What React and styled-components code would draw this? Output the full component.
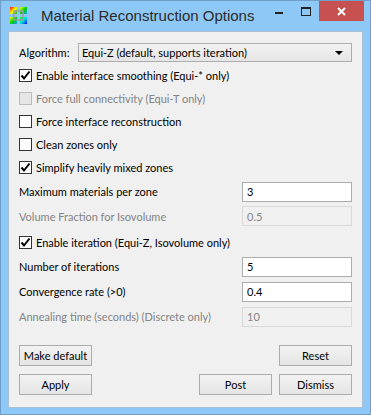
import React from 'react';
import styled, { createGlobalStyle } from 'styled-components';

const GlobalStyle = createGlobalStyle`
  html, body { margin: 0; padding: 0; }
  body {
    width: 371px;
    height: 415px;
    overflow: hidden;
    background: #8dc8f7;
    font-family: Lato, "Liberation Sans", Arial, sans-serif;
  }
`;

const Window = styled.div`
  width: 371px;
  height: 415px;
  box-sizing: border-box;
  background: #8dc8f7;
  border: 1px solid #6f9ec9;
  display: flex;
  flex-direction: column;
`;

const TitleBar = styled.div`
  height: 30px;
  display: flex;
  align-items: flex-start;
  padding-left: 9px;
`;

const TitleIcon = styled.div`
  width: 17px;
  height: 17px;
  margin-top: 6px;
`;

const TitleText = styled.div`
  margin-left: 14px;
  margin-top: 6px;
  font-family: "Liberation Sans", Arial, sans-serif;
  font-size: 15px;
  white-space: nowrap;
  color: #2b2b2b;
  flex: 1;
`;

const Controls = styled.div`
  display: flex;
  align-items: flex-start;
  margin-right: 6px;
`;

const CtrlButton = styled.div`
  width: ${p => p.$w}px;
  height: 20px;
  display: flex;
  align-items: center;
  justify-content: center;
  background: ${p => (p.$close ? '#c75050' : 'transparent')};
`;

const Panel = styled.div`
  flex: 1;
  margin: 0 7px 6px 7px;
  background: #f0f0f0;
  border: 1px solid #a9bfd6;
  padding: 11px 10px 0 10px;
  font-size: 11px;
  color: #000;
  display: flex;
  flex-direction: column;
`;

const AlgoRow = styled.div`
  display: flex;
  align-items: center;
  height: 19px;
  margin-bottom: 2px;
`;

const AlgoLabel = styled.div`
  width: 59px;
`;

const Combo = styled.div`
  flex: 1;
  height: 19px;
  box-sizing: border-box;
  border: 1px solid #acacac;
  background: linear-gradient(#f2f2f2, #e5e5e5);
  display: flex;
  align-items: center;
  padding: 0 8px 0 3px;
`;

const ComboText = styled.div`
  flex: 1;
`;

const Arrow = styled.div`
  width: 0;
  height: 0;
  border-left: 4px solid transparent;
  border-right: 4px solid transparent;
  border-top: 4px solid #000;
`;

const CheckRow = styled.div`
  display: flex;
  align-items: center;
  height: 23px;
  margin-top: ${p => p.$mt || 0}px;
  color: ${p => (p.$disabled ? '#838383' : '#000')};
`;

const Box = styled.div`
  width: 13px;
  height: 13px;
  box-sizing: border-box;
  border: 1px solid ${p => (p.$disabled ? '#bcbcbc' : '#333')};
  background: ${p => (p.$disabled ? '#e6e6e6' : '#fff')};
  margin-right: 4px;
  display: flex;
  align-items: center;
  justify-content: center;
`;

const FieldRow = styled.div`
  display: flex;
  align-items: center;
  justify-content: space-between;
  height: ${p => p.$h || 25}px;
  color: ${p => (p.$disabled ? '#838383' : '#000')};
`;

const Input = styled.div`
  width: 110px;
  height: 20px;
  box-sizing: border-box;
  border: 1px solid ${p => (p.$disabled ? '#d9d9d9' : '#acacac')};
  background: ${p => (p.$disabled ? '#f0f0f0' : '#fff')};
  color: ${p => (p.$disabled ? '#838383' : '#000')};
  padding-left: 4px;
  display: flex;
  align-items: center;
`;

const ButtonArea = styled.div`
  margin-top: 16px;
  display: flex;
  flex-direction: column;
  gap: 8px;
`;

const ButtonRow = styled.div`
  display: flex;
  gap: 7px;
`;

const Spacer = styled.div`
  flex: 1;
`;

const Button = styled.div`
  width: 73px;
  height: 21px;
  box-sizing: border-box;
  border: 1px solid #acacac;
  background: linear-gradient(#f2f2f2, #e5e5e5);
  display: flex;
  align-items: center;
  justify-content: center;
`;

const Check = () => (
  <svg width="11" height="11" viewBox="0 0 11 11">
    <path d="M1.5 5.5 L4 8.5 L9.5 1.5" fill="none" stroke="#000" strokeWidth="2" />
  </svg>
);

const AppIcon = () => (
  <svg width="17" height="17" viewBox="0 0 17 17">
    <defs>
      <linearGradient id="g1" x1="0" y1="0" x2="1" y2="1">
        <stop offset="0" stopColor="#ff0000" />
        <stop offset="0.5" stopColor="#ffff00" />
        <stop offset="1" stopColor="#00c000" />
      </linearGradient>
      <linearGradient id="g2" x1="0" y1="0" x2="1" y2="1">
        <stop offset="0" stopColor="#ffff00" />
        <stop offset="0.5" stopColor="#00d000" />
        <stop offset="1" stopColor="#00a0ff" />
      </linearGradient>
      <linearGradient id="g3" x1="0" y1="0" x2="1" y2="1">
        <stop offset="0" stopColor="#00ff00" />
        <stop offset="0.5" stopColor="#00e0e0" />
        <stop offset="1" stopColor="#0000ff" />
      </linearGradient>
    </defs>
    <rect x="0" y="0" width="7" height="7" fill="url(#g1)" />
    <rect x="10" y="0" width="7" height="7" fill="url(#g2)" />
    <rect x="0" y="10" width="7" height="7" fill="url(#g2)" />
    <rect x="10" y="10" width="7" height="7" fill="url(#g3)" />
    <rect x="4" y="4" width="9" height="9" fill="none" stroke="#9a9aa8" strokeWidth="1.5" />
  </svg>
);

const checks = [
  { label: 'Enable interface smoothing (Equi-* only)', checked: true },
  { label: 'Force full connectivity (Equi-T only)', disabled: true },
  { label: 'Force interface reconstruction' },
  { label: 'Clean zones only' },
  { label: 'Simplify heavily mixed zones', checked: true },
];

const CheckItem = ({ label, checked, disabled, mt }) => (
  <CheckRow $disabled={disabled} $mt={mt}>
    <Box $disabled={disabled}>{checked && <Check />}</Box>
    {label}
  </CheckRow>
);

const Field = ({ label, value, disabled, h }) => (
  <FieldRow $disabled={disabled} $h={h}>
    <span>{label}</span>
    <Input $disabled={disabled}>{value}</Input>
  </FieldRow>
);

export default function App() {
  return (
    <>
      <GlobalStyle />
      <Window>
        <TitleBar>
          <TitleIcon><AppIcon /></TitleIcon>
          <TitleText>Material Reconstruction Options</TitleText>
          <Controls>
            <CtrlButton $w={26}>
              <svg width="8" height="8" viewBox="0 0 8 8"><rect x="0" y="5" width="8" height="2" fill="#222" /></svg>
            </CtrlButton>
            <CtrlButton $w={27}>
              <svg width="10" height="9" viewBox="0 0 10 9"><rect x="0.5" y="0.5" width="9" height="8" fill="none" stroke="#222" /><rect x="0" y="0" width="10" height="2" fill="#222" /></svg>
            </CtrlButton>
            <CtrlButton $w={45} $close>
              <svg width="9" height="9" viewBox="0 0 9 9"><path d="M1 1 L8 8 M8 1 L1 8" stroke="#fff" strokeWidth="2" /></svg>
            </CtrlButton>
          </Controls>
        </TitleBar>
        <Panel>
          <AlgoRow>
            <AlgoLabel>Algorithm:</AlgoLabel>
            <Combo>
              <ComboText>Equi-Z (default, supports iteration)</ComboText>
              <Arrow />
            </Combo>
          </AlgoRow>
          {checks.map(c => <CheckItem key={c.label} {...c} />)}
          <Field label="Maximum materials per zone" value="3" />
          <Field label="Volume Fraction for Isovolume" value="0.5" disabled h={24} />
          <CheckItem label="Enable iteration (Equi-Z, Isovolume only)" checked mt={3} />
          <Field label="Number of iterations" value="5" />
          <Field label="Convergence rate (>0)" value="0.4" />
          <Field label="Annealing time (seconds) (Discrete only)" value="10" disabled />
          <ButtonArea>
            <ButtonRow>
              <Button>Make default</Button>
              <Spacer />
              <Button>Reset</Button>
            </ButtonRow>
            <ButtonRow>
              <Button>Apply</Button>
              <Spacer />
              <Button>Post</Button>
              <Button>Dismiss</Button>
            </ButtonRow>
          </ButtonArea>
        </Panel>
      </Window>
    </>
  );
}
